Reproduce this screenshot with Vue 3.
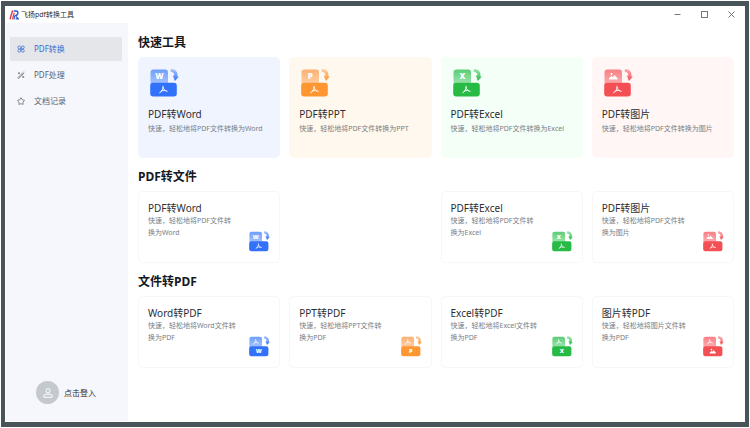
<script setup>
import { h } from 'vue'

const palettes = {
  word: { main: '#3272fa', light: '#6f9ffb', pale: '#a9c5fc', glyph: 'W' },
  ppt: { main: '#fe9632', light: '#fcb172', pale: '#fdd0a6', glyph: 'P' },
  excel: { main: '#27bb45', light: '#5acd75', pale: '#a0e5b0', glyph: 'X' },
  image: { main: '#f44f55', light: '#f98085', pale: '#fbaeb1', glyph: '' },
}

const PdfMark = (props) =>
  h('path', {
    transform: `translate(${props.x} ${props.y})`,
    d: 'M-.3-3.4C.5-1.5-1.7 2.4-3.5 3.1M-.2-2.2C0-.2 1.7 1.5 3.8 1.7M-2.1 1.5C-.8.9.8.8 2 1',
    fill: 'none',
    stroke: '#fff',
    'stroke-width': 1,
    'stroke-linecap': 'round',
    opacity: props.opacity,
  })
PdfMark.props = ['x', 'y', 'opacity']

const TypeMark = (props) => {
  const glyph = palettes[props.kind].glyph
  if (glyph) {
    return h('text', { x: props.x, y: props.y + 3, class: 'glyph', 'text-anchor': 'middle' }, glyph)
  }
  return h('path', {
    transform: `translate(${props.x} ${props.y})`,
    d: 'M-4.200 3.200V1.800L-2-.4-.8.8 1.200-1.500 4.200 1.800V3.200ZM-1.800-3.400a1 1 0 1 0 .01 0Z',
    fill: '#fff',
  })
}
TypeMark.props = ['kind', 'x', 'y']

const FileIcon = (props) => {
  const p = palettes[props.kind]
  const id = `${props.kind}-${props.reverse ? 'r' : 'f'}-${props.scope}`
  return h('svg', { viewBox: '0 0 29 28', 'aria-hidden': 'true' }, [
    h('defs', [
      h('linearGradient', { id, x1: 0, y1: 0, x2: 0, y2: 1 }, [
        h('stop', { offset: 0, 'stop-color': p.light }),
        h('stop', { offset: 1, 'stop-color': p.pale }),
      ]),
      h('linearGradient', { id: id + 'a', x1: 0, y1: 0, x2: 0, y2: 1 }, [
        h('stop', { offset: 0, 'stop-color': p.pale }),
        h('stop', { offset: 1, 'stop-color': p.main }),
      ]),
    ]),
    h('path', { d: 'M3.500 .6H15.200Q18 .6 18 3.400V15.500H.5V3.400Q.5 .6 3.500 .6Z', fill: `url(#${id})` }),
    h('rect', { x: 0.2, y: 13.8, width: 26.6, height: 13.6, rx: 3, fill: p.main }),
    h('path', {
      d: 'M20.800 0C26 0 28 3.500 27.400 7.300L28.800 7.800 24.900 12 22.700 6.300 24.300 6.700C24.600 4.500 23.300 3 20.800 2.800Z',
      fill: `url(#${id}a)`,
    }),
    ...(props.reverse
      ? [h(PdfMark, { x: 9.5, y: 7.6, opacity: 0.85 }), h(TypeMark, { kind: props.kind, x: 13.5, y: 20.6 })]
      : [h(TypeMark, { kind: props.kind, x: 9.3, y: 7.4 }), h(PdfMark, { x: 13.3, y: 20.6, opacity: 1 })]),
  ])
}
FileIcon.props = ['kind', 'reverse', 'scope']

const quick = [
  { kind: 'word', title: 'PDF转Word', text: '快速，轻松地将PDF文件转换为Word' },
  { kind: 'ppt', title: 'PDF转PPT', text: '快速，轻松地将PDF文件转换为PPT' },
  { kind: 'excel', title: 'PDF转Excel', text: '快速，轻松地将PDF文件转换为Excel' },
  { kind: 'image', title: 'PDF转图片', text: '快速，轻松地将PDF文件转换为图片' },
]

const sections = [
  {
    title: 'PDF转文件',
    reverse: false,
    items: [
      { kind: 'word', title: 'PDF转Word', text: '快速，轻松地将PDF文件转\n换为Word' },
      null,
      { kind: 'excel', title: 'PDF转Excel', text: '快速，轻松地将PDF文件转\n换为Excel' },
      { kind: 'image', title: 'PDF转图片', text: '快速，轻松地将PDF文件转\n换为图片' },
    ],
  },
  {
    title: '文件转PDF',
    reverse: true,
    items: [
      { kind: 'word', title: 'Word转PDF', text: '快速，轻松地将Word文件转\n换为PDF' },
      { kind: 'ppt', title: 'PPT转PDF', text: '快速，轻松地将PPT文件转\n换为PDF' },
      { kind: 'excel', title: 'Excel转PDF', text: '快速，轻松地将Excel文件转\n换为PDF' },
      { kind: 'image', title: '图片转PDF', text: '快速，轻松地将图片文件转\n换为PDF' },
    ],
  },
]
</script>

<template>
  <div class="window">
    <header class="titlebar">
      <svg class="logo" viewBox="0 0 10 10" aria-hidden="true">
        <path d="M3.600 .5 1 9.300" stroke="#e8404c" stroke-width="1.500" fill="none" />
        <path d="M5.200 2.800 3.500 9.300" stroke="#e8404c" stroke-width="1.300" fill="none" />
        <path d="M4.600 1H7.100Q9.300 1.200 8.800 3.500 8.200 5.700 5.900 5.700" stroke="#2b5fd9" stroke-width="1.500" fill="none" />
        <path d="M5.600 5.600 5 9.300M7 6.500 9.500 8.900H6.600" stroke="#2b5fd9" stroke-width="1.200" fill="none" />
      </svg>
      <h1>飞扬pdf转换工具</h1>
      <div class="controls">
        <button type="button" aria-label="最小化">
          <svg viewBox="0 0 7 7"><path d="M.5 3.500h6" /></svg>
        </button>
        <button type="button" aria-label="最大化">
          <svg viewBox="0 0 7 7"><rect x=".5" y=".5" width="6" height="6" /></svg>
        </button>
        <button type="button" aria-label="关闭">
          <svg viewBox="0 0 7 7"><path d="M.5.5l6 6M6.500.5l-6 6" /></svg>
        </button>
      </div>
    </header>

    <div class="body">
      <aside class="sidebar">
        <nav>
          <a href="#convert" class="active" aria-current="page">
            <svg viewBox="0 0 8 8" aria-hidden="true">
              <path d="M3.700 3.700H2.200A1.400 1.400 0 1 1 3.700 2.300ZM4.500 3.700V2.100A1.400 1.400 0 1 1 6 3.700ZM3.700 4.400V6A1.400 1.400 0 1 1 2.200 4.400ZM4.500 4.400H6A1.400 1.400 0 1 1 4.500 6Z" />
            </svg>
            <span>PDF转换</span>
          </a>
          <a href="#process">
            <svg viewBox="0 0 8 8" aria-hidden="true">
              <path d="M.7 6.800 5.800 1.900 6.600 2.700 1.500 7.500ZM4.600 3l.9.900M1 2.200h2M2 1.200v2M5.200 6h2M6.200 5v2M6.900.6v1" />
            </svg>
            <span>PDF处理</span>
          </a>
          <a href="#records">
            <svg viewBox="0 0 8 8" aria-hidden="true">
              <path d="M4 .7 5.200 2.700 7.500 3.300 6 5.100 6.100 7.400 4 6.700 1.900 7.400 2 5.100.5 3.300 2.800 2.700Z" />
            </svg>
            <span>文档记录</span>
          </a>
        </nav>
        <button type="button" class="login">
          <span class="avatar">
            <svg viewBox="0 0 10 10" aria-hidden="true">
              <circle cx="5" cy="2.800" r="2.100" />
              <path d="M.8 9.200V8Q.8 6.200 2.800 6.200H7.200Q9.200 6.200 9.200 8V9.200Z" />
            </svg>
          </span>
          点击登入
        </button>
      </aside>

      <main>
        <section>
          <h2>快速工具</h2>
          <div class="grid">
            <button
              v-for="item in quick"
              :key="item.title"
              type="button"
              class="card quick"
              :class="item.kind"
            >
              <FileIcon class="icon" :kind="item.kind" scope="quick" />
              <span class="name">{{ item.title }}</span>
              <span class="text">{{ item.text }}</span>
            </button>
          </div>
        </section>

        <section v-for="(section, s) in sections" :key="section.title">
          <h2>{{ section.title }}</h2>
          <div class="grid">
            <template v-for="(item, i) in section.items" :key="i">
              <button v-if="item" type="button" class="card small">
                <span class="name">{{ item.title }}</span>
                <span class="text">{{ item.text }}</span>
                <FileIcon class="icon" :kind="item.kind" :reverse="section.reverse" :scope="s" />
              </button>
              <div v-else></div>
            </template>
          </div>
        </section>
      </main>
    </div>
  </div>
</template>

<style>
body {
  background: #fff;
}
.glyph {
  font: 800 8px "Open Sans", sans-serif;
  fill: #fff;
}
</style>

<style scoped>
.window {
  box-sizing: border-box;
  display: flex;
  flex-direction: column;
  min-height: calc(100vh - 2px);
  margin: 1px;
  padding: 0 0 1px 1px;
  border: solid #48545a;
  border-width: 5px 4px;
  background: #fff;
  color: #2b2e33;
  font-family: "Noto Sans", "Noto Sans CJK SC", sans-serif;
  font-size: 8px;
}
button {
  margin: 0;
  padding: 0;
  border: 0;
  background: none;
  color: inherit;
  font: inherit;
  cursor: pointer;
}
.titlebar {
  display: flex;
  align-items: center;
  height: 17px;
  padding: 0 10px 0 3px;
}
.logo {
  width: 10px;
  height: 10px;
}
h1 {
  margin: 0 0 0 2px;
  font-size: 7px;
  font-weight: 400;
  line-height: 12px;
}
.controls {
  display: flex;
  gap: 20px;
  margin-left: auto;
}
.controls button {
  display: flex;
}
.controls svg {
  width: 7px;
  height: 7px;
  fill: none;
  stroke: #777;
  stroke-width: 1;
}
.body {
  display: flex;
  flex: 1;
}
.sidebar {
  box-sizing: border-box;
  display: flex;
  flex-direction: column;
  justify-content: space-between;
  flex: 0 0 122px;
  padding: 14px 6px 17px 4px;
  background: #f6f7fc;
}
nav {
  display: flex;
  flex-direction: column;
  gap: 2px;
}
nav a {
  display: flex;
  align-items: center;
  gap: 9px;
  height: 24px;
  padding-left: 7px;
  color: #5c6066;
  text-decoration: none;
}
nav span {
  line-height: 12px;
  padding-bottom: 1px;
}
nav svg {
  width: 8px;
  height: 8px;
  fill: none;
  stroke: currentColor;
  stroke-width: 0.7;
}
nav .active {
  background: #e4e6ea;
  border-radius: 1px;
  color: #3a6bd0;
}
.login {
  display: flex;
  align-items: center;
  align-self: flex-start;
  gap: 5px;
  margin-left: 26px;
}
.avatar {
  display: flex;
  align-items: center;
  justify-content: center;
  width: 23px;
  height: 23px;
  border-radius: 50%;
  background: #c4c9cd;
}
.avatar svg {
  width: 10px;
  height: 10px;
  fill: none;
  stroke: #fff;
  stroke-width: 1;
}
main {
  flex: 1;
  min-width: 0;
  padding: 11px 11px 0 10px;
}
section {
  margin-bottom: 10px;
}
h2 {
  margin: 0 0 5px;
  color: #15181e;
  font-size: 12px;
  font-weight: 700;
  line-height: 18px;
}
.grid {
  display: grid;
  grid-template-columns: repeat(4, minmax(0, 1fr));
  gap: 9px;
}
.card {
  display: flex;
  flex-direction: column;
  align-items: flex-start;
  box-sizing: border-box;
  border-radius: 5px;
  text-align: left;
}
.name {
  font-size: 10px;
  line-height: 14px;
}
.text {
  color: #7b7e83;
  font-size: 7px;
  line-height: 12px;
  white-space: pre-line;
}
.quick {
  min-height: 101px;
  padding: 12px 10px;
}
.quick .icon {
  width: 29px;
  height: 28px;
  margin: 0 0 10px 2px;
}
.quick .text {
  margin-top: 2px;
}
.word {
  background: #eff4ff;
}
.ppt {
  background: #fff8ee;
}
.excel {
  background: #f4fff7;
}
.image {
  background: #fff6f5;
}
.small {
  position: relative;
  min-height: 72px;
  padding: 9px;
  border: 1px solid #f6f7f8;
  background: #fff;
}
.small .icon {
  position: absolute;
  right: 9px;
  bottom: 10px;
  width: 21px;
  height: 21px;
}
</style>
